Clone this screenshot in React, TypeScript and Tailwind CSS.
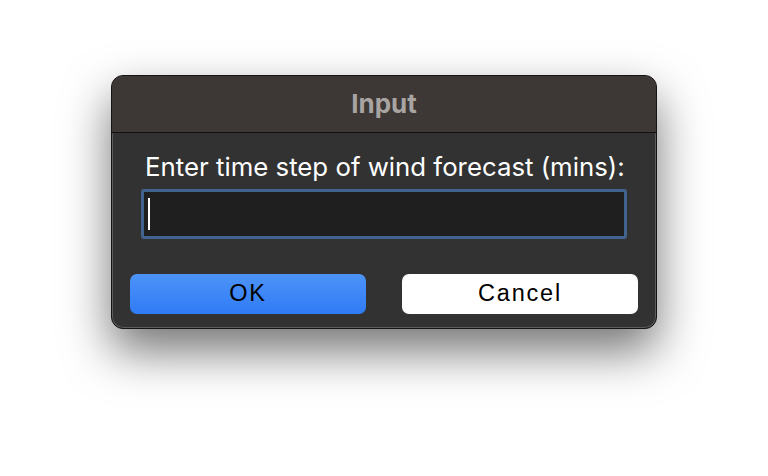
import React from 'react';

export default function App() {
    return (
        <div className="w-[768px] h-[476px] bg-white flex justify-center pt-[75px]">
            {/* Dialog window */}
            <div className="w-[546px] h-[254px] rounded-[12px] border border-[#141414] bg-[#323232] shadow-[0_22px_48px_rgba(0,0,0,0.55),inset_0_0_0_1px_#5c5c5c] flex flex-col overflow-hidden">
                <div className="h-[57px] shrink-0 bg-[#3d3735] border-b border-[#121212] flex items-center justify-center">
                    <span className="text-[26px] leading-[30px] font-bold text-[#a8a4a2] font-['Inter',sans-serif]">
                        Input
                    </span>
                </div>

                <div className="flex flex-col px-[18px]">
                    <div className="pl-[15px] pt-[19px] h-[56px] text-[25.8px] text-white font-['Inter',sans-serif] leading-[30px] whitespace-nowrap">
                        Enter time step of wind forecast (mins):
                    </div>
                    <div className="mx-[11px] h-[50px] border-[3px] border-[#41638f] rounded-[3px] bg-[#1f1f1f] flex items-center pl-[4px]">
                        <div className="w-[2px] h-[32px] bg-white" />
                    </div>

                    <div className="flex justify-between mt-[35px] font-['Liberation_Sans',sans-serif] text-[23.5px] tracking-[1.8px] text-black">
                        <button className="w-[236px] h-[40px] rounded-[7px] bg-gradient-to-b from-[#4d93f7] to-[#2f7bf6] flex items-center justify-center">
                            OK
                        </button>
                        <button className="w-[236px] h-[40px] rounded-[7px] bg-white flex items-center justify-center">
                            Cancel
                        </button>
                    </div>
                </div>
            </div>
        </div>
    );
}
